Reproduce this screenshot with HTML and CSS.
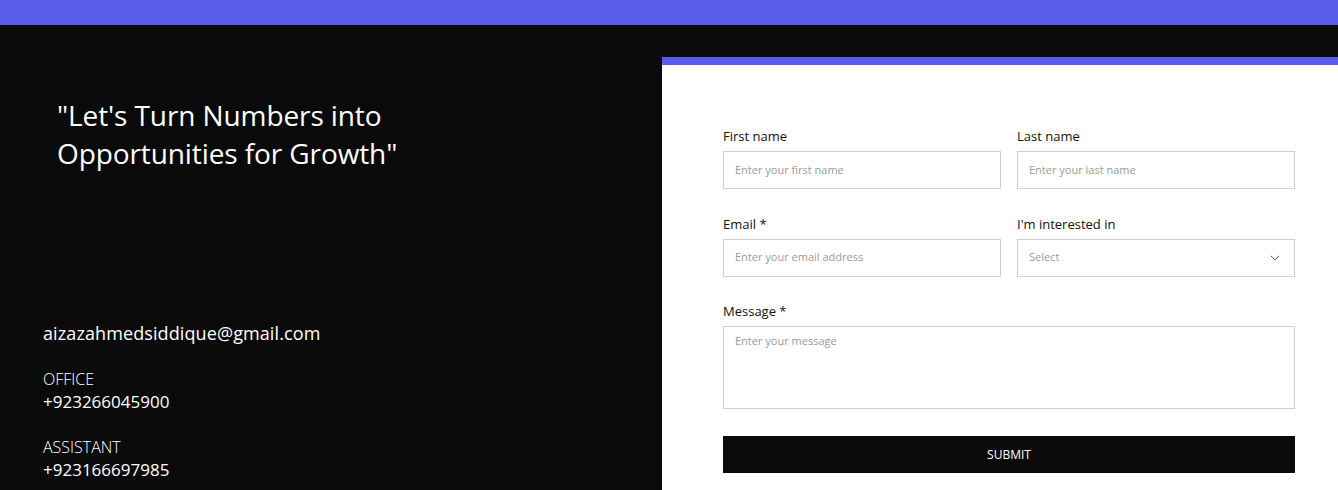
FILE: index.html
```html
<!DOCTYPE html>
<html lang="en">
<head>
    <meta charset="UTF-8">
    <meta name="viewport" content="width=device-width, initial-scale=1.0">
    <title>Contact</title>
    <link rel="stylesheet" href="styles.css">
</head>
<body>
    <div class="top-bar"></div>

    <main class="contact">
        <section class="contact-info">
            <h1 class="quote">"Let's Turn Numbers into<br>Opportunities for Growth"</h1>

            <div class="details">
                <p class="email">aizazahmedsiddique@gmail.com</p>

                <div class="detail-group">
                    <span class="detail-label">OFFICE</span>
                    <span class="detail-value">+923266045900</span>
                </div>

                <div class="detail-group">
                    <span class="detail-label">ASSISTANT</span>
                    <span class="detail-value">+923166697985</span>
                </div>
            </div>
        </section>

        <section class="form-card">
            <form class="contact-form">
                <div class="field">
                    <label for="firstName">First name</label>
                    <input type="text" id="firstName" placeholder="Enter your first name">
                </div>
                <div class="field">
                    <label for="lastName">Last name</label>
                    <input type="text" id="lastName" placeholder="Enter your last name">
                </div>
                <div class="field">
                    <label for="email">Email *</label>
                    <input type="email" id="email" placeholder="Enter your email address">
                </div>
                <div class="field">
                    <label for="interest">I'm interested in</label>
                    <div class="select-wrap">
                        <select id="interest">
                            <option>Select</option>
                        </select>
                        <svg class="chevron" width="10" height="6" viewBox="0 0 10 6" fill="none">
                            <path d="M0.8 0.8l4.2 4 4.2-4" stroke="#555" stroke-width="1"/>
                        </svg>
                    </div>
                </div>
                <div class="field full">
                    <label for="message">Message *</label>
                    <textarea id="message" placeholder="Enter your message"></textarea>
                </div>
                <button type="button" class="submit-btn">SUBMIT</button>
            </form>
        </section>
    </main>
</body>
</html>
```

FILE: styles.css
```css
:root {
    --accent: #5b5ce9;
    --bg-dark: #0a0a0a;
    --text-light: #ffffff;
    --text-dark: #111111;
    --border: #cfcfcf;
    --placeholder: #9b9b9b;
}

* {
    margin: 0;
    padding: 0;
    box-sizing: border-box;
}

body {
    font-family: 'Open Sans', 'Liberation Sans', sans-serif;
    background: var(--bg-dark);
    height: 490px;
    overflow: hidden;
}

.top-bar {
    height: 25px;
    background: var(--accent);
}

.contact {
    display: grid;
    grid-template-columns: 662px 1fr;
}

.contact-info {
    padding: 71px 0 0 43px;
    color: var(--text-light);
}

.quote {
    font-size: 28px;
    font-weight: 400;
    line-height: 38px;
    margin-left: 14px;
    letter-spacing: -0.1px;
}

.details {
    margin-top: 150px;
}

.email {
    font-size: 18px;
    line-height: 23px;
    letter-spacing: 0.1px;
}

.detail-group {
    display: flex;
    flex-direction: column;
    margin-top: 22px;
}

.detail-label {
    font-size: 16px;
    font-weight: 300;
    line-height: 23px;
    padding-top: 1px;
    margin-bottom: -1px;
}

.detail-value {
    font-size: 17px;
    line-height: 23px;
}

.form-card {
    margin-top: 32px;
    background: #ffffff;
    border-top: 8px solid var(--accent);
    padding: 63px 43px 0 61px;
    min-height: 433px;
}

.contact-form {
    display: grid;
    grid-template-columns: 1fr 1fr;
    column-gap: 16px;
    row-gap: 26.5px;
}

.field {
    display: flex;
    flex-direction: column;
}

.field.full {
    grid-column: 1 / -1;
}

.field label {
    font-size: 13px;
    line-height: 16px;
    color: var(--text-dark);
    margin-bottom: 7px;
}

.field input,
.field select,
.field textarea {
    font-family: inherit;
    font-size: 11px;
    color: var(--text-dark);
    border: 1px solid var(--border);
    border-radius: 0;
    background: #ffffff;
    padding: 0 11px 2px;
    outline: none;
}

.field input,
.field select {
    height: 38px;
}

.field textarea {
    height: 83px;
    padding-top: 6px;
    resize: none;
}

.field input::placeholder,
.field textarea::placeholder {
    color: var(--placeholder);
}

.select-wrap {
    position: relative;
}

.select-wrap select {
    width: 100%;
    appearance: none;
    color: var(--placeholder);
}

.chevron {
    position: absolute;
    right: 15px;
    top: 16px;
    pointer-events: none;
}

.submit-btn {
    grid-column: 1 / -1;
    height: 37px;
    background: var(--bg-dark);
    color: #ffffff;
    border: none;
    font-family: inherit;
    font-size: 12px;
    cursor: pointer;
}
```
